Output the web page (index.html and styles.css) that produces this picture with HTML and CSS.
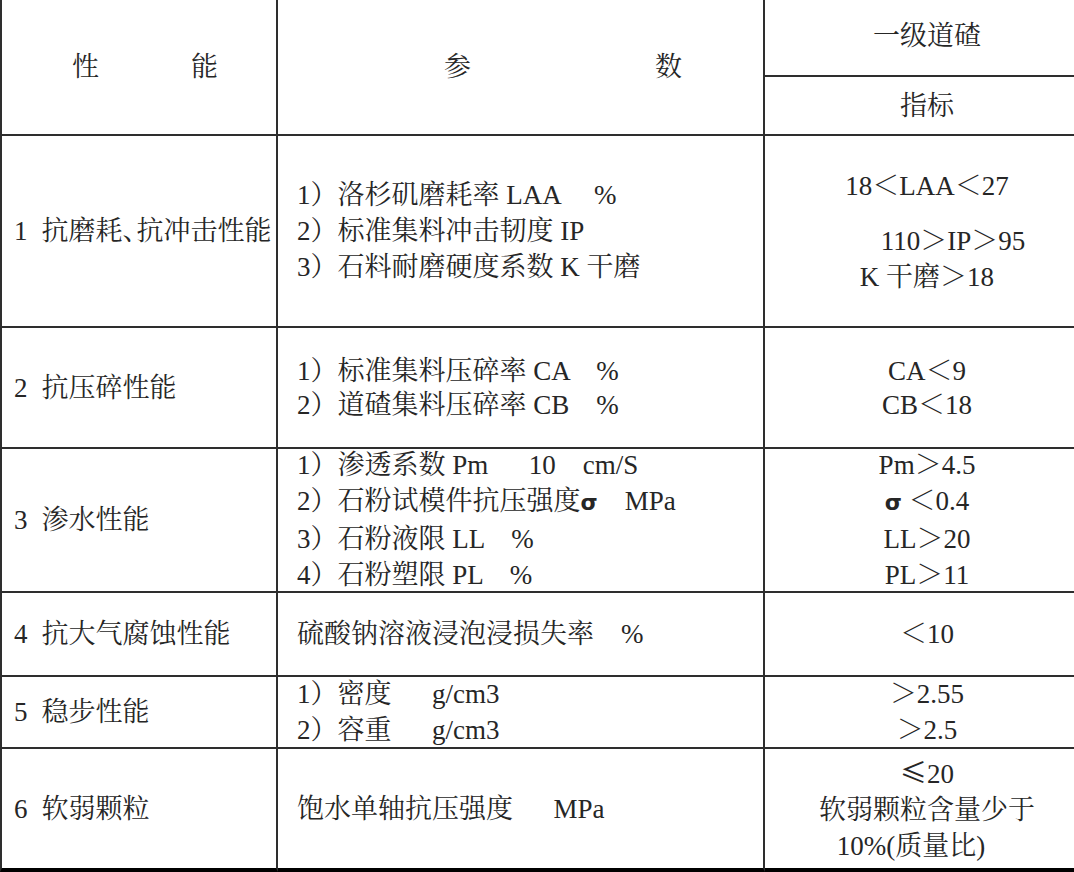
FILE: index.html
```html
<!DOCTYPE html>
<html lang="zh-CN">
<head>
<meta charset="utf-8">
<title>一级道碴性能指标</title>
<link rel="stylesheet" href="styles.css">
</head>
<body>
<div class="sheet">
  <div class="grid">
    <div class="c c1 hd1"><span>性</span><span>能</span></div>
    <div class="c c2 hd2"><span>参</span><span>数</span></div>
    <div class="c c3 top">一级道碴</div>
    <div class="c c3">指标</div>

    <div class="c c1"><span class="no">1</span>抗磨耗<span class="dun">、</span>抗冲击性能</div>
    <div class="c c2"><div class="stack"><div>1）洛杉矶磨耗率 LAA     %</div><div>2）标准集料冲击韧度 IP</div><div>3）石料耐磨硬度系数 K 干磨</div></div></div>
    <div class="c c3"><div class="stack r1v"><div class="gap">18＜LAA＜27</div><div class="shift">110＞IP＞95</div><div>K 干磨＞18</div></div></div>

    <div class="c c1"><span class="no">2</span>抗压碎性能</div>
    <div class="c c2"><div class="stack tight"><div>1）标准集料压碎率 CA    %</div><div>2）道碴集料压碎率 CB    %</div></div></div>
    <div class="c c3"><div class="stack tight"><div>CA＜9</div><div>CB＜18</div></div></div>

    <div class="c c1"><span class="no">3</span>渗水性能</div>
    <div class="c c2"><div class="stack"><div>1）渗透系数 Pm      10    cm/S</div><div>2）石粉试模件抗压强度<span class="sig">σ</span>    MPa</div><div>3）石粉液限 LL    %</div><div>4）石粉塑限 PL    %</div></div></div>
    <div class="c c3"><div class="stack"><div>Pm＞4.5</div><div><span class="sig">σ</span> ＜0.4</div><div>LL＞20</div><div>PL＞11</div></div></div>

    <div class="c c1"><span class="no">4</span>抗大气腐蚀性能</div>
    <div class="c c2"><div class="line">硫酸钠溶液浸泡浸损失率    %</div></div>
    <div class="c c3">＜10</div>

    <div class="c c1"><span class="no">5</span>稳步性能</div>
    <div class="c c2"><div class="stack"><div>1）密度      g/cm3</div><div>2）容重      g/cm3</div></div></div>
    <div class="c c3"><div class="stack"><div>＞2.55</div><div>＞2.5</div></div></div>

    <div class="c c1 last"><span class="no">6</span>软弱颗粒</div>
    <div class="c c2 last"><div class="line">饱水单轴抗压强度      MPa</div></div>
    <div class="c c3 last"><div class="stack r6"><div><span class="cjk">≤</span>20</div><div>软弱颗粒含量少于</div><div class="left">10%(质量比)</div></div></div>
  </div>
</div>
</body>
</html>
```

FILE: styles.css
```css
html, body {
  margin: 0;
  padding: 0;
  background: #ffffff;
}

.sheet {
  width: 1074px;
  height: 872px;
  overflow: hidden;
  background: #ffffff;
}

.grid {
  display: grid;
  grid-template-columns: 278px 487px 324px;
  grid-template-rows: 77px 59px 192px 121px 144px 84px 72px 123px;
  font-family: "Liberation Serif", "Noto Serif CJK SC", "Noto Sans CJK SC", serif;
  font-size: 27px;
  color: #262626;
  line-height: 36px;
}

.c {
  box-sizing: border-box;
  display: flex;
  align-items: center;
  border-right: 2px solid #2e2e2e;
  border-bottom: 2px solid #2e2e2e;
  white-space: pre;
}

.c1 {
  border-left: 2px solid #2e2e2e;
  padding-left: 12px;
}

.c2 {
  padding-left: 19px;
}

.c3 {
  border-right: none;
  justify-content: center;
  text-align: center;
}

.top {
  padding-bottom: 4px;
}

.hd1 {
  grid-row: span 2;
  justify-content: space-between;
  padding: 0 58px 0 70px;
}

.hd2 {
  grid-row: span 2;
  justify-content: space-between;
  padding: 0 81px 0 166px;
}

.no {
  margin-right: 14px;
}

.dun {
  letter-spacing: -13px;
}

.stack {
  display: flex;
  flex-direction: column;
}

.tight {
  line-height: 34px;
}

.r1v .gap {
  margin-bottom: 19px;
}

.r1v .shift {
  padding-left: 52px;
}

.r6 .left {
  padding-right: 32px;
}

.sig {
  font-family: "DejaVu Sans", sans-serif;
  font-weight: bold;
  font-size: 22px;
}

.cjk {
  font-family: "Noto Sans CJK SC", sans-serif;
}

.last {
  border-bottom: 4px solid #000000;
}
```
